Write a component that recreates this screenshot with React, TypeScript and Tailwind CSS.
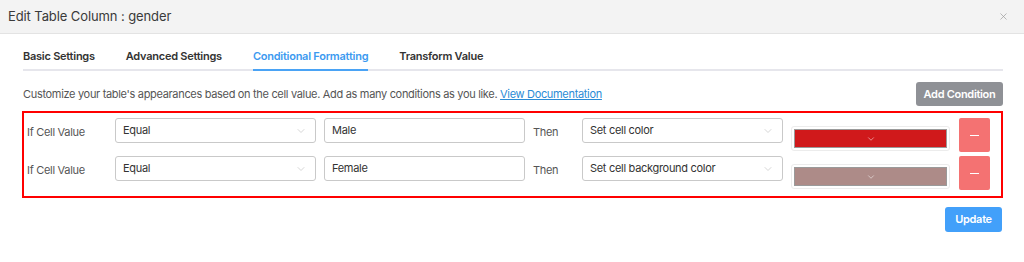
import { ChevronDown, X } from "lucide-react";

const TABS = ["Basic Settings", "Advanced Settings", "Conditional Formatting", "Transform Value"];
const ACTIVE_TAB = "Conditional Formatting";

type Condition = {
  operator: string;
  value: string;
  action: string;
  color: string;
};

const conditions: Condition[] = [
  { operator: "Equal", value: "Male", action: "Set cell color", color: "bg-[#d0191b]" },
  { operator: "Equal", value: "Female", action: "Set cell background color", color: "bg-[#ad8b88]" },
];

function SelectBox({ label }: { label: string }) {
  return (
    <div className="flex h-[25px] w-[201px] shrink-0 items-center justify-between rounded-[3px] border border-[#c9c9c9] bg-white pl-[7px] pr-[8px] text-[11px] text-[#333]">
      <span>{label}</span>
      <ChevronDown className="h-[12px] w-[12px] text-[#c8c8c8]" strokeWidth={1.5} />
    </div>
  );
}

function ConditionRow({ c }: { c: Condition }) {
  return (
    <div className="flex items-start">
      <span className="mt-[7px] w-[88px] shrink-0 text-[11px] leading-[14px] text-[#555]">If Cell Value</span>
      <SelectBox label={c.operator} />
      <div className="ml-[8px] flex h-[25px] w-[201px] shrink-0 items-center rounded-[3px] border border-[#c9c9c9] bg-white px-[7px] text-[11px] text-[#333]">
        {c.value}
      </div>
      <span className="ml-[8px] mt-[7px] w-[49px] shrink-0 text-[11px] leading-[14px] text-[#555]">Then</span>
      <SelectBox label={c.action} />
      {/* color picker */}
      <div className="ml-[8px] mt-[8px] h-[25px] w-[159px] shrink-0 rounded-[3px] border border-[#ececec] bg-white p-[2px]">
        <div className={`flex h-full w-full items-center justify-center border border-[#9a9a9a] ${c.color}`}>
          <ChevronDown className="h-[10px] w-[10px] text-white/80" strokeWidth={1.5} />
        </div>
      </div>
      <button
        type="button"
        className="ml-[9px] flex h-[34px] w-[31px] shrink-0 items-center justify-center rounded-[2px] bg-[#f47272]"
      >
        <span className="block h-px w-[9px] bg-white" />
      </button>
    </div>
  );
}

export default function App() {
  return (
    <div className="h-[262px] w-[1024px] bg-white font-['Inter','Liberation_Sans',sans-serif] tracking-[-0.3px] text-[#333]">
      <header className="flex h-[34px] items-center justify-between border-b border-[#e3e3e3] bg-[#f3f3f3] pl-[8px] pr-[15px]">
        <h1 className="text-[13px] font-normal tracking-[-0.1px] text-[#3a3a3a]">Edit Table Column : gender</h1>
        <X className="h-[11px] w-[11px] text-[#9a9a9a]" strokeWidth={1.5} />
      </header>

      <div className="pl-[22px] pr-[21px]">
        <nav className="ml-px mt-[15px] flex gap-[31px] border-b-2 border-[#e6e6ec]">
          {TABS.map((tab) => (
            <span
              key={tab}
              className={`-mb-[2px] border-b-2 pb-[6px] text-[11px] font-semibold leading-[14px] tracking-[-0.25px] ${
                tab === ACTIVE_TAB ? "border-[#4aa3f5] text-[#3c9af0]" : "border-transparent text-[#333]"
              }`}
            >
              {tab}
            </span>
          ))}
        </nav>

        <div className="ml-px mt-[11px] flex items-center justify-between">
          <p className="text-[11px] tracking-[-0.32px] text-[#555]">
            Customize your table's appearances based on the cell value. Add as many conditions as you like.{" "}
            <a href="#" className="text-[#2a8bd6] underline">
              View Documentation
            </a>
          </p>
          <button
            type="button"
            className="h-[24px] w-[87px] rounded-[3px] bg-[#8f9196] text-[11px] font-semibold text-white"
          >
            Add Condition
          </button>
        </div>

        <div className="mt-[5px] flex flex-col gap-[4px] border-2 border-[#ff0000] pb-[6px] pl-[3px] pr-[11px] pt-[5px]">
          {conditions.map((c) => (
            <ConditionRow key={c.value} c={c} />
          ))}
        </div>

        <div className="mt-[9px] flex justify-end pr-px">
          <button
            type="button"
            className="h-[25px] w-[57px] rounded-[3px] bg-[#42a0fa] text-[11px] font-semibold text-white"
          >
            Update
          </button>
        </div>
      </div>
    </div>
  );
}
